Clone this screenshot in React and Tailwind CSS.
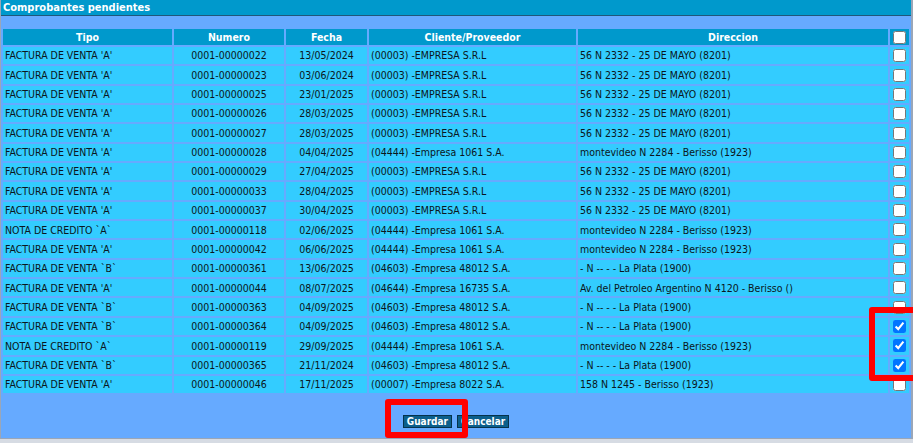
import React from 'react'

const SRL = '(00003) -EMPRESA S.R.L'
const MAYO = '56 N 2332 - 25 DE MAYO (8201)'
const E1061 = '(04444) -Empresa 1061 S.A.'
const MONTE = 'montevideo N 2284 - Berisso (1923)'
const E48012 = '(04603) -Empresa 48012 S.A.'
const PLATA = '- N -- - - La Plata (1900)'
const FVA = "FACTURA DE VENTA 'A'"
const FVB = 'FACTURA DE VENTA `B`'
const NCA = 'NOTA DE CREDITO `A`'

const rows = [
    { tipo: FVA, numero: '0001-00000022', fecha: '13/05/2024', cliente: SRL, dir: MAYO },
    { tipo: FVA, numero: '0001-00000023', fecha: '03/06/2024', cliente: SRL, dir: MAYO },
    { tipo: FVA, numero: '0001-00000025', fecha: '23/01/2025', cliente: SRL, dir: MAYO },
    { tipo: FVA, numero: '0001-00000026', fecha: '28/03/2025', cliente: SRL, dir: MAYO },
    { tipo: FVA, numero: '0001-00000027', fecha: '28/03/2025', cliente: SRL, dir: MAYO },
    { tipo: FVA, numero: '0001-00000028', fecha: '04/04/2025', cliente: E1061, dir: MONTE },
    { tipo: FVA, numero: '0001-00000029', fecha: '27/04/2025', cliente: SRL, dir: MAYO },
    { tipo: FVA, numero: '0001-00000033', fecha: '28/04/2025', cliente: SRL, dir: MAYO },
    { tipo: FVA, numero: '0001-00000037', fecha: '30/04/2025', cliente: SRL, dir: MAYO },
    { tipo: NCA, numero: '0001-00000118', fecha: '02/06/2025', cliente: E1061, dir: MONTE },
    { tipo: FVA, numero: '0001-00000042', fecha: '06/06/2025', cliente: E1061, dir: MONTE },
    { tipo: FVB, numero: '0001-00000361', fecha: '13/06/2025', cliente: E48012, dir: PLATA },
    { tipo: FVA, numero: '0001-00000044', fecha: '08/07/2025', cliente: '(04644) -Empresa 16735 S.A.', dir: 'Av. del Petroleo Argentino N 4120 - Berisso ()' },
    { tipo: FVB, numero: '0001-00000363', fecha: '04/09/2025', cliente: E48012, dir: PLATA },
    { tipo: FVB, numero: '0001-00000364', fecha: '04/09/2025', cliente: E48012, dir: PLATA, sel: true },
    { tipo: NCA, numero: '0001-00000119', fecha: '29/09/2025', cliente: E1061, dir: MONTE, sel: true },
    { tipo: FVB, numero: '0001-00000365', fecha: '21/11/2024', cliente: E48012, dir: PLATA, sel: true },
    { tipo: FVA, numero: '0001-00000046', fecha: '17/11/2025', cliente: '(00007) -Empresa 8022 S.A.', dir: '158 N 1245 - Berisso (1923)' },
]

const th = 'h-[16px] p-0 bg-[#0099cc] text-white font-bold text-center align-middle'
const td = 'h-[17.35px] p-0 bg-[#33ccff] align-middle whitespace-nowrap overflow-hidden'

export default function App() {
    return (
        <div className="relative w-[913px] h-[443px] bg-[#d6dbe3] text-[10.5px] leading-none text-[#0b1620]" style={{ fontFamily: '"DejaVu Sans Condensed", "DejaVu Sans", sans-serif' }}>
            <div className="flex flex-col h-[439px] bg-[#66aaff] border-l border-r-2 border-b border-[#9aa6b8]">
                <div className="h-[16px] bg-[#0099cc] border-b border-[#20587a] pl-[2px] flex items-center text-white font-bold text-[11px]">
                    Comprobantes pendientes
                </div>
                <table className="mt-[11px] w-[910px] table-fixed border-separate border-spacing-x-[2px] border-spacing-y-[2px]">
                    <colgroup>
                        <col className="w-[169px]" />
                        <col className="w-[110px]" />
                        <col className="w-[81px]" />
                        <col className="w-[207px]" />
                        <col className="w-[310px]" />
                        <col className="w-[19px]" />
                    </colgroup>
                    <thead>
                        <tr>
                            <th className={th}>Tipo</th>
                            <th className={th}>Numero</th>
                            <th className={th}>Fecha</th>
                            <th className={th}>Cliente/Proveedor</th>
                            <th className={th}>Direccion</th>
                            <th className={th}>
                                <input type="checkbox" className="m-0 w-[13px] h-[13px] align-middle" />
                            </th>
                        </tr>
                    </thead>
                    <tbody>{rows.map((r) => (
                        <tr key={r.numero}>
                            <td className={td + ' pl-[2px]'}>{r.tipo}</td>
                            <td className={td + ' text-center'}>{r.numero}</td>
                            <td className={td + ' text-center'}>{r.fecha}</td>
                            <td className={td + ' pl-[2px]'}>{r.cliente}</td>
                            <td className={td + ' pl-[2px]'}>{r.dir}</td>
                            <td className={td + ' text-center'}>
                                <input type="checkbox" defaultChecked={!!r.sel} className="m-0 w-[13px] h-[13px] align-middle" />
                            </td>
                        </tr>
                    ))}</tbody>
                </table>
                <div className="mt-[20px] flex justify-center gap-[5px]">
                    <button className="h-[13px] px-[3px] bg-[#0b5f8c] border border-[#06324a] text-white font-bold text-[10px] leading-none">Guardar</button>
                    <button className="h-[13px] px-[3px] bg-[#0b5f8c] border border-[#06324a] text-white font-bold text-[10px] leading-none">Cancelar</button>
                </div>
            </div>

            {/* red highlight frames */}
            <div className="absolute left-[869px] top-[307px] w-[60px] h-[74px] border-[6px] border-[#ff0000] rounded-[3px]" />
            <div className="absolute left-[385px] top-[399px] w-[83px] h-[39px] border-[6px] border-[#ff0000] rounded-[3px]" />
        </div>
    )
}
